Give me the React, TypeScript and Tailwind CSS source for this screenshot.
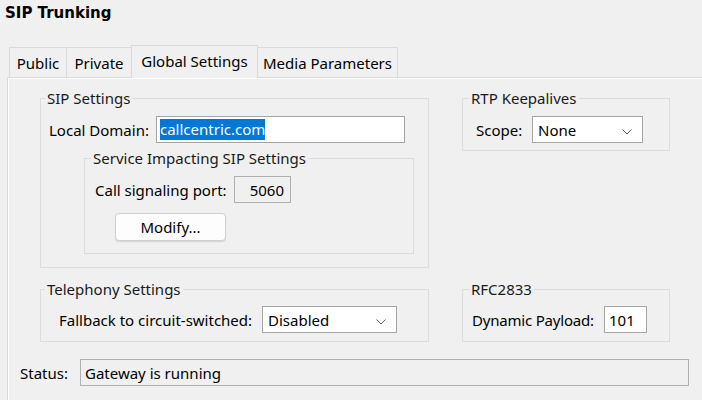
import React from "react";

function Group({
  title,
  className = "",
  legendMl = "ml-[5px]",
  children,
}: {
  title: string;
  className?: string;
  legendMl?: string;
  children: React.ReactNode;
}) {
  return (
    <fieldset className={`border border-[#dcdcdc] ${className}`}>
      <legend className={`${legendMl} px-[2px] leading-[16px] text-[15px] text-[#1a1a1a]`}>{title}</legend>
      {children}
    </fieldset>
  );
}

function Chevron() {
  return (
    <svg width="10" height="6" viewBox="0 0 10 6" className="shrink-0">
      <polyline points="0.5,0.5 5,5 9.5,0.5" fill="none" stroke="#606060" strokeWidth="1" />
    </svg>
  );
}

function Select({ value, className = "" }: { value: string; className?: string }) {
  return (
    <div
      className={`flex items-center justify-between h-[27px] border border-[#a5a5a5] bg-white pl-[5px] pr-[10px] shrink-0 ${className}`}
    >
      <span className="leading-[18px]">{value}</span>
      <div className="mt-[4px]">
        <Chevron />
      </div>
    </div>
  );
}

export default function App() {
  return (
    <div className="w-[702px] h-[400px] bg-[#f0f0f0] overflow-hidden flex flex-col text-[15px] text-black font-['Noto_Sans','Open_Sans',sans-serif]">
      <div className="h-[45px] shrink-0 pl-[5px] pt-[4px]">
        <div className="font-['DejaVu_Sans',sans-serif] font-bold text-[15px] leading-[18px]">SIP Trunking</div>
      </div>

      <div className="h-[32px] shrink-0 flex items-end pl-[9px] leading-[18px]">
        <div className="w-[58px] h-[30px] border-l border-t border-r border-[#d9d9d9] flex items-center justify-center">
          Public
        </div>
        <div className="w-[64px] h-[30px] border-t border-[#d9d9d9] flex items-center justify-center">
          Private
        </div>
        <div className="relative z-10 w-[127px] h-[33px] -mb-[1px] border-l border-t border-r border-[#d9d9d9] bg-[#f0f0f0] flex items-center justify-center pb-[3px]">
          Global Settings
        </div>
        <div className="w-[140px] h-[30px] border-t border-r border-[#d9d9d9] flex items-center justify-center">
          Media Parameters
        </div>
      </div>

      <div className="flex-1 ml-[7px] border-l border-t border-[#d9d9d9] shadow-[inset_1px_1px_0_#ffffff] flex flex-col">
        <div className="flex items-start mt-[12px] ml-[32px]">
          <Group title="SIP Settings" className="w-[389px] pb-[13px]" legendMl="ml-[4px]">
            <div className="flex items-center mt-[10px] pl-[8px]">
              <div className="w-[107px] leading-[18px]">Local Domain:</div>
              <div className="w-[249px] h-[27px] border border-[#a5a5a5] bg-white pl-[3px] flex items-center">
                <span className="bg-[#0078d7] text-white leading-[21px]">callcentric.com</span>
              </div>
            </div>
            <Group title="Service Impacting SIP Settings" className="mt-[7px] ml-[43px] w-[330px] pb-[12px]" legendMl="ml-[6px]">
              <div className="flex items-center mt-[10px] pl-[10px]">
                <div className="w-[139px] leading-[18px]">Call signaling port:</div>
                <div className="w-[57px] h-[27px] border border-[#b0b0b0] bg-[#f0f0f0] flex items-center justify-end pr-[6px] leading-[18px]">
                  5060
                </div>
              </div>
              <button className="mt-[10px] ml-[30px] w-[111px] h-[28px] rounded-[4px] border border-[#d0d0d0] bg-[#fdfdfd] shadow-[0_1px_1px_#d4d4d4] flex items-center justify-center leading-[18px]">
                Modify...
              </button>
            </Group>
          </Group>

          <Group title="RTP Keepalives" className="ml-[33px] w-[208px] pb-[7px]" legendMl="ml-[6px]">
            <div className="flex items-center mt-[10px] pl-[13px]">
              <div className="w-[56px] leading-[18px]">Scope:</div>
              <Select value="None" className="w-[111px]" />
            </div>
          </Group>
        </div>

        <div className="flex items-start mt-[13px] ml-[32px]">
          <Group title="Telephony Settings" className="w-[389px] pb-[8px]" legendMl="ml-[4px]">
            <div className="flex items-center mt-[9px] pl-[18px]">
              <div className="w-[203px] shrink-0 whitespace-nowrap leading-[18px]">Fallback to circuit-switched:</div>
              <Select value="Disabled" className="w-[135px]" />
            </div>
          </Group>

          <Group title="RFC2833" className="ml-[33px] w-[208px] pb-[8px]" legendMl="ml-[6px]">
            <div className="flex items-center mt-[9px] pl-[9px]">
              <div className="w-[132px] shrink-0 whitespace-nowrap tracking-[-0.2px] leading-[18px]">Dynamic Payload:</div>
              <div className="w-[43px] h-[27px] shrink-0 border border-[#a5a5a5] bg-white flex items-center pl-[4px] leading-[18px]">
                101
              </div>
            </div>
          </Group>
        </div>

        <div className="flex items-center mt-[17px] pl-[12px]">
          <div className="w-[60px] leading-[18px]">Status:</div>
          <div className="w-[609px] h-[27px] border border-[#b0b0b0] bg-[#f0f0f0] flex items-center pl-[4px] leading-[18px]">
            Gateway is running
          </div>
        </div>
      </div>
    </div>
  );
}
